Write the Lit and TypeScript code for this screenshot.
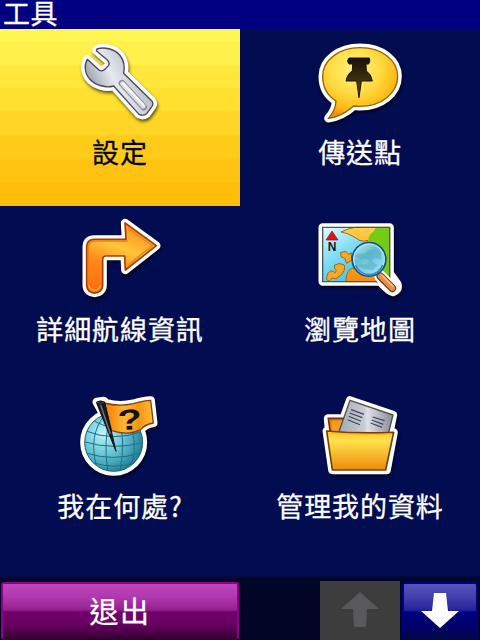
import { css, html, LitElement, svg } from 'lit';
import { customElement, property } from 'lit/decorators.js';

const wrench = svg`
  <svg viewBox="0 0 300 285" width="100" height="95">
    <defs>
      <linearGradient id="steel" x1="0" y1="1" x2="1" y2="0.5">
        <stop offset="0" stop-color="#9aa3ae" />
        <stop offset="0.3" stop-color="#a9b1bb" />
        <stop offset="0.55" stop-color="#e8e9f0" />
        <stop offset="1" stop-color="#a5adb8" />
      </linearGradient>
    </defs>
    <path class="rim" d="M81 42C102 35 132 41 149 60C162 76 165 96 161 115L245 197Q252 204 246 214L230 236Q220 244 207 238L131 153C108 160 76 151 59 132C44 116 42 90 52 73L86 104Q96 112 105 103L116 91Q120 84 113 76L79 47Z" />
    <path d="M81 42C102 35 132 41 149 60C162 76 165 96 161 115L245 197Q252 204 246 214L230 236Q220 244 207 238L131 153C108 160 76 151 59 132C44 116 42 90 52 73L86 104Q96 112 105 103L116 91Q120 84 113 76L79 47Z"
      fill="url(#steel)" stroke="#4d4652" stroke-width="4" stroke-linejoin="round" />
    <path d="M156 145L221 216" stroke="#858d99" stroke-width="20" stroke-linecap="round" />
    <path d="M157 146L220 214" stroke="#d9dce3" stroke-width="14" stroke-linecap="round" />
    <path d="M158 144L221 211" stroke="#fafafa" stroke-width="6" stroke-linecap="round" />
  </svg>`;

const pinBubble = svg`
  <svg viewBox="0 0 300 285" width="100" height="95">
    <defs>
      <radialGradient id="bubble" cx="0.42" cy="0.3" r="0.68">
        <stop offset="0" stop-color="#fff27c" />
        <stop offset="0.5" stop-color="#ffdc42" />
        <stop offset="0.85" stop-color="#fdb913" />
        <stop offset="1" stop-color="#ef920c" />
      </radialGradient>
      <linearGradient id="pin" x1="0" y1="0" x2="0" y2="1">
        <stop offset="0" stop-color="#161109" />
        <stop offset="1" stop-color="#5e4a0c" />
      </linearGradient>
    </defs>
    <path class="rim" d="M150 38C216 38 263 76 263 124C263 175 214 214 150 214C143 214 137 214 131 213C109 233 84 247 55 250C68 236 77 219 78 198C50 181 38 153 38 124C38 75 88 38 150 38Z" />
    <path d="M150 38C216 38 263 76 263 124C263 175 214 214 150 214C143 214 137 214 131 213C109 233 84 247 55 250C68 236 77 219 78 198C50 181 38 153 38 124C38 75 88 38 150 38Z"
      fill="url(#bubble)" stroke="#9a6205" stroke-width="4" stroke-linejoin="round" />
    <path d="M117 69H178Q182 78 176 87H168L169 108Q184 117 187 138H154L147 188L140 138H108Q112 116 127 108L128 87H117Q108 79 117 69Z"
      fill="url(#pin)" stroke="#191207" stroke-width="3" />
  </svg>`;

const turnArrow = svg`
  <svg viewBox="0 6 300 285" width="100" height="95">
    <defs>
      <linearGradient id="arrow" x1="0" y1="1" x2="0.4" y2="0">
        <stop offset="0" stop-color="#ff690a" />
        <stop offset="0.45" stop-color="#ff891a" />
        <stop offset="0.72" stop-color="#ffc63b" />
        <stop offset="1" stop-color="#ff9b20" />
      </linearGradient>
    </defs>
    <path class="rim" d="M165 39L259 107L166 180L164 138H108Q98 138 98 149V226C98 257 50 257 50 226V111Q50 88 73 88H168Z" />
    <path d="M165 39L259 107L166 180L164 138H108Q98 138 98 149V226C98 257 50 257 50 226V111Q50 88 73 88H168Z"
      fill="url(#arrow)" stroke="#a33f06" stroke-width="5" stroke-linejoin="round" />
    <path d="M173 54L247 107L173 166M55 226V112Q56 93 74 93H173" fill="none" stroke="#f17f10" stroke-width="4" />
    <path d="M57 226C58 245 90 245 91 226" fill="none" stroke="#ffb637" stroke-width="4" />
  </svg>`;

const mapLens = svg`
  <svg viewBox="0 6 300 285" width="100" height="95">
    <defs>
      <linearGradient id="sea" x1="0" y1="0" x2="0.8" y2="1">
        <stop offset="0" stop-color="#e8fbff" />
        <stop offset="0.4" stop-color="#83ddf8" />
        <stop offset="1" stop-color="#20bce8" />
      </linearGradient>
      <linearGradient id="land" x1="0" y1="0" x2="0" y2="1">
        <stop offset="0" stop-color="#ffd04b" />
        <stop offset="1" stop-color="#f58a10" />
      </linearGradient>
      <linearGradient id="lens" x1="0" y1="0" x2="0.7" y2="1">
        <stop offset="0" stop-color="#d3f2f3" />
        <stop offset="0.45" stop-color="#65bfd3" />
        <stop offset="1" stop-color="#9be3f6" />
      </linearGradient>
    </defs>
    <path class="rim" d="M38 52H239V190L262 222Q267 239 249 246Q237 245 211 215H38Z" />
    <path d="M38 52H239V215H38Z" fill="url(#sea)" />
    <path d="M93 66Q112 56 135 52H239V215H108Q107 190 121 177L175 161L173 91Q162 96 148 91Q140 85 127 78Q115 70 93 66Z"
      fill="url(#land)" stroke="#a66a0a" stroke-width="3" />
    <path d="M197 53H238V214H224L194 175V101L175 92Q176 72 190 66Z" fill="#75cb15" />
    <path d="M92 127L108 124L116 133L124 128L125 151L110 160L104 145L93 140ZM74 165Q89 156 103 165Q107 182 92 197Q84 198 80 207L66 204L58 214L49 208L53 190L63 182L76 188L79 181Q69 176 74 165Z"
      fill="#f7a724" stroke="#a66a0a" stroke-width="3" stroke-linejoin="round" />
    <path d="M38 52H239V215H38Z" fill="none" stroke="#4d5562" stroke-width="4" />
    <path d="M66 63L84 90H48Z" fill="#e51515" stroke="#861010" stroke-width="2" />
    <text x="66" y="123" text-anchor="middle" font-size="36" font-weight="700" fill="#111827">N</text>
    <path d="M211 199L248 237" stroke="#fff" stroke-width="36" stroke-linecap="round" />
    <path d="M211 199L247 235" stroke="#71360d" stroke-width="23" stroke-linecap="round" />
    <path d="M212 199L247 234" stroke="#f08a49" stroke-width="17" stroke-linecap="round" />
    <path d="M217 197L248 228" stroke="#ffc18c" stroke-width="5" stroke-linecap="round" />
    <circle cx="177" cy="148" r="50" fill="url(#lens)" stroke="#174e7c" stroke-width="6" />
    <path d="M133 137Q151 127 163 132L178 119L196 116L213 128V149L196 143L184 153L203 165L188 180L164 177L140 163L165 164L178 157L170 145L152 147Z" fill="#52adbd" opacity=".5" />
    <circle cx="177" cy="148" r="46" fill="none" stroke="#aee5f5" stroke-width="4" />
    <path d="M137 166A43 43 0 0 0 218 165" fill="none" stroke="#318bd0" stroke-width="5" />
  </svg>`;

const globeFlag = svg`
  <svg viewBox="0 -3 300 285" width="100" height="95">
    <defs>
      <radialGradient id="globe" cx="0.32" cy="0.35" r="0.72">
        <stop offset="0" stop-color="#c0f5fa" />
        <stop offset="0.5" stop-color="#65c6d6" />
        <stop offset="1" stop-color="#1f8096" />
      </radialGradient>
      <linearGradient id="flag" x1="0" y1="0" x2="1" y2="0">
        <stop offset="0" stop-color="#f47b08" />
        <stop offset="0.42" stop-color="#ffb92e" />
        <stop offset="0.7" stop-color="#f79410" />
        <stop offset="1" stop-color="#ffbd3b" />
      </linearGradient>
    </defs>
    <g class="rim">
      <circle cx="131" cy="157" r="88" />
      <path d="M80 36L102 33L107 39Q148 51 190 41Q220 32 242 31L250 99Q224 104 212 119Q173 138 126 121Z" />
    </g>
    <circle cx="131" cy="157" r="87" fill="url(#globe)" stroke="#176176" stroke-width="3" />
    <g fill="none" stroke="#236e83" stroke-width="3">
      <path d="M74 94Q128 126 191 96M51 124Q128 155 213 126M45 156Q130 181 218 158M51 190Q130 215 212 189M72 219Q129 237 190 220" />
      <path d="M104 75Q55 135 79 226M122 71Q99 151 113 243M143 71Q169 149 150 242M169 80Q207 145 185 224" />
    </g>
    <path d="M103 39Q147 51 190 41Q220 32 242 31L250 99Q224 104 212 119Q173 138 125 122Z" fill="url(#flag)" stroke="#8b3c06" stroke-width="4" stroke-linejoin="round" />
    <text transform="translate(181 119) rotate(-3) scale(1.36 1)" text-anchor="middle" font-size="87" font-weight="700" fill="#131117">?</text>
    <path d="M79 37Q91 29 104 36L138 184Z" fill="#171920" stroke="#101117" stroke-width="3" />
    <path d="M92 45L121 132" stroke="#777985" stroke-width="4" />
    <path d="M80 37Q92 44 103 36" fill="none" stroke="#4e4e5b" stroke-width="3" />
  </svg>`;

const folder = svg`
  <svg viewBox="0 -3 300 285" width="100" height="95">
    <defs>
      <linearGradient id="folder" x1="0" y1="0" x2="0" y2="1">
        <stop offset="0" stop-color="#ffc52d" />
        <stop offset="0.25" stop-color="#ffe24c" />
        <stop offset="1" stop-color="#ee8b08" />
      </linearGradient>
      <linearGradient id="sheet" x1="0" y1="0" x2="1" y2="0">
        <stop offset="0" stop-color="#a2a8b2" />
        <stop offset="0.47" stop-color="#c8ccd4" />
        <stop offset="0.53" stop-color="#dee0e7" />
        <stop offset="1" stop-color="#858d99" />
      </linearGradient>
    </defs>
    <path class="rim" d="M54 85H101L120 31L249 75L238 128L251 127L230 240H67L50 123H57Z" />
    <path d="M55 85H112V130H61Z" fill="#e77808" stroke="#74300a" stroke-width="5" />
    <path d="M64 97L70 92H107V125H66Z" fill="#f89b22" />
    <path d="M120 31L249 75L232 144L85 130Z" fill="url(#sheet)" stroke="#4d4e56" stroke-width="4" />
    <path d="M123 59L162 73M119 69L157 83M116 79L153 94M113 89L150 104M188 81L224 92M185 90L220 103M182 99L216 112" stroke="#424752" stroke-width="3.5" />
    <path d="M50 123Q150 132 251 127L227 240H67Z" fill="url(#folder)" stroke="#71400b" stroke-width="5" stroke-linejoin="round" />
    <path d="M61 130Q150 136 244 132" fill="none" stroke="#ffbb22" stroke-width="4" />
  </svg>`;

@customElement('tool-item')
export class ToolItem extends LitElement {
  static styles = css`
    :host {
      display: flex;
      flex-direction: column;
      align-items: center;
      box-sizing: border-box;
      padding-top: 6px;
      color: #fff;
    }

    :host([selected]) {
      color: #07071f;
      background: linear-gradient(
        #fff652 0 12px, #fff04b 13px 35px, #ffe73b 37px 58px, #ffdf30 60px 81px,
        #ffd526 84px 105px, #ffcb19 108px 129px, #ffc411 132px 152px, #ffbd0b 154px
      );
    }

    svg {
      display: block;
      flex: none;
      overflow: visible;
      font-family: 'Liberation Sans', sans-serif;
    }

    svg text {
      -webkit-text-stroke: 0;
    }

    .rim {
      fill: #fff;
      stroke: #fff;
      stroke-width: 25px;
      stroke-linejoin: round;
      filter: drop-shadow(3px 7px 4px rgba(0, 0, 0, 0.6));
    }

    .label {
      font-size: 27px;
      line-height: 44px;
      letter-spacing: 0.9px;
      white-space: nowrap;
    }
  `;

  @property({ type: String }) label = '';

  @property({ type: Boolean, reflect: true }) selected = false;

  @property({ attribute: false }) icon: unknown;

  render() {
    return html`
      ${this.icon}
      <div class="label">${this.label}</div>
    `;
  }
}

@customElement('app-root')
export class AppRoot extends LitElement {
  static styles = css`
    :host {
      display: flex;
      flex-direction: column;
      width: 480px;
      height: 640px;
      background: #020c50;
      color: #fff;
      font-family: 'Noto Sans CJK TC', sans-serif;
      -webkit-text-stroke: 0.3px;
    }

    .header {
      flex: none;
      height: 29px;
      padding-left: 3px;
      background: #000080;
      font-size: 27px;
      line-height: 26px;
      letter-spacing: 0.5px;
    }

    .grid {
      flex: none;
      display: grid;
      grid-template-columns: 1fr 1fr;
      grid-template-rows: repeat(3, 177px);
    }

    .footer {
      flex: 1;
      display: grid;
      grid-template-columns: 240px 80px 80px 80px;
      grid-template-rows: 59px;
      align-content: end;
      background: linear-gradient(#020c50 0, #020c50 15px, #020626 19px);
    }

    .exit {
      box-sizing: border-box;
      margin: 1px 1px 0;
      border: 2px solid #8e0087;
      border-bottom-color: #35002f;
      border-radius: 3px;
      background: linear-gradient(#bd47bb 0, #b138af 13px, #93218e 26px, #700069 28px, #6b0065 39px, #3b0037 100%);
      font-size: 29px;
      line-height: 53px;
      letter-spacing: 1.5px;
      text-align: center;
    }

    .arrow {
      display: flex;
      justify-content: center;
    }

    .up {
      grid-column: 3;
      background: #3d3d3d;
      fill: #59595d;
    }

    .down {
      box-sizing: border-box;
      margin: 1px 2px 0 2px;
      border: 2px solid #000080;
      border-bottom-color: #02064d;
      border-radius: 3px;
      background: linear-gradient(#5653bd 0, #4240ad 13px, #23239b 26px, #000080 28px, #00006d 42px, #020645 100%);
      fill: #fff;
    }
  `;

  private tools = [
    { label: '設定', icon: wrench },
    { label: '傳送點', icon: pinBubble },
    { label: '詳細航線資訊', icon: turnArrow },
    { label: '瀏覽地圖', icon: mapLens },
    { label: '我在何處?', icon: globeFlag },
    { label: '管理我的資料', icon: folder },
  ];

  render() {
    return html`
      <div class="header">工具</div>
      <div class="grid">
        ${this.tools.map((tool, i) => html`
          <tool-item .label=${tool.label} .icon=${tool.icon} ?selected=${i === 0}></tool-item>
        `)}
      </div>
      <div class="footer">
        <div class="exit">退出</div>
        <div class="arrow up">
          <svg width="40" height="59"><path d="M20 11L39 28H27L26 46H14L13 28H1Z" /></svg>
        </div>
        <div class="arrow down">
          <svg width="40" height="55"><path d="M14 9H26L28 27H39L20 44L1 27H12Z" /></svg>
        </div>
      </div>
    `;
  }
}

declare global {
  interface HTMLElementTagNameMap {
    'app-root': AppRoot;
    'tool-item': ToolItem;
  }
}
